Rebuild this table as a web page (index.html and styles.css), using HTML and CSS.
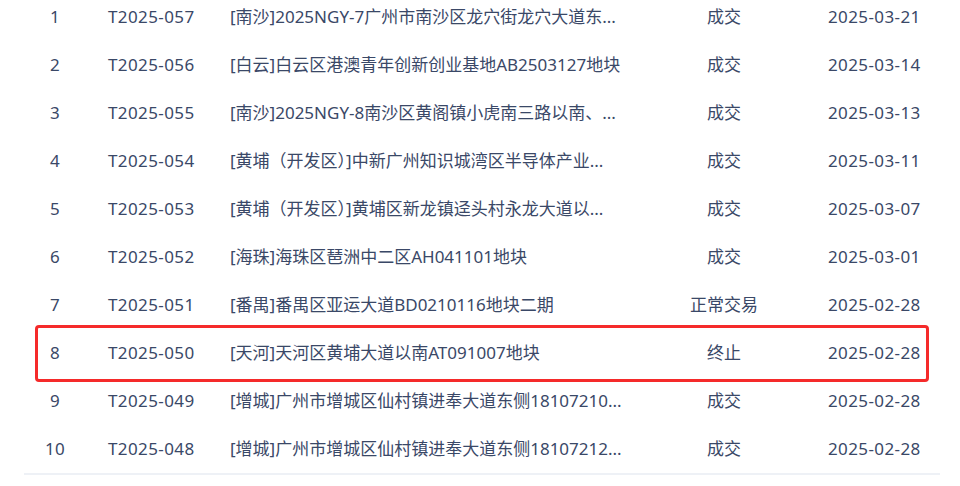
FILE: index.html
```html
<!DOCTYPE html>
<html lang="zh-CN">
<head>
<meta charset="utf-8">
<title>土地交易列表</title>
<link rel="stylesheet" href="styles.css">
</head>
<body>
<div class="list">
  <div class="row"><span class="c-idx">1</span><span class="c-code">T2025-057</span><span class="c-name">[南沙]2025NGY-7广州市南沙区龙穴街龙穴大道东...</span><span class="c-status">成交</span><span class="c-date">2025-03-21</span></div>
  <div class="row"><span class="c-idx">2</span><span class="c-code">T2025-056</span><span class="c-name">[白云]白云区港澳青年创新创业基地AB2503127地块</span><span class="c-status">成交</span><span class="c-date">2025-03-14</span></div>
  <div class="row"><span class="c-idx">3</span><span class="c-code">T2025-055</span><span class="c-name">[南沙]2025NGY-8南沙区黄阁镇小虎南三路以南、...</span><span class="c-status">成交</span><span class="c-date">2025-03-13</span></div>
  <div class="row"><span class="c-idx">4</span><span class="c-code">T2025-054</span><span class="c-name">[黄埔（开发区）]中新广州知识城湾区半导体产业...</span><span class="c-status">成交</span><span class="c-date">2025-03-11</span></div>
  <div class="row"><span class="c-idx">5</span><span class="c-code">T2025-053</span><span class="c-name">[黄埔（开发区）]黄埔区新龙镇迳头村永龙大道以...</span><span class="c-status">成交</span><span class="c-date">2025-03-07</span></div>
  <div class="row"><span class="c-idx">6</span><span class="c-code">T2025-052</span><span class="c-name">[海珠]海珠区琶洲中二区AH041101地块</span><span class="c-status">成交</span><span class="c-date">2025-03-01</span></div>
  <div class="row"><span class="c-idx">7</span><span class="c-code">T2025-051</span><span class="c-name">[番禺]番禺区亚运大道BD0210116地块二期</span><span class="c-status">正常交易</span><span class="c-date">2025-02-28</span></div>
  <div class="row row-marked"><span class="c-idx">8</span><span class="c-code">T2025-050</span><span class="c-name">[天河]天河区黄埔大道以南AT091007地块</span><span class="c-status">终止</span><span class="c-date">2025-02-28</span></div>
  <div class="row"><span class="c-idx">9</span><span class="c-code">T2025-049</span><span class="c-name">[增城]广州市增城区仙村镇进奉大道东侧18107210...</span><span class="c-status">成交</span><span class="c-date">2025-02-28</span></div>
  <div class="row"><span class="c-idx">10</span><span class="c-code">T2025-048</span><span class="c-name">[增城]广州市增城区仙村镇进奉大道东侧18107212...</span><span class="c-status">成交</span><span class="c-date">2025-02-28</span></div>
</div>
</body>
</html>
```
FILE: styles.css
```css
html, body {
  margin: 0;
  padding: 0;
  background: #ffffff;
}
body {
  font-family: "Noto Sans", "Noto Sans CJK SC", sans-serif;
  font-size: 17px;
  color: #3a4867;
  overflow: hidden;
}
.list {
  margin: -7px 20px 0 24px;
  border-bottom: 2px solid #eef1f6;
}
.row {
  display: grid;
  grid-template-columns: 62px 122px 422px 188px 1fr;
  height: 48px;
  align-items: center;
  line-height: 24px;
}
.c-idx {
  text-align: center;
  letter-spacing: 0.4px;
}
.c-code,
.c-name {
  padding-left: 22px;
  white-space: nowrap;
  overflow: hidden;
  text-overflow: ellipsis;
}
.c-code {
  letter-spacing: 0.4px;
}
.c-status {
  text-align: center;
}
.c-date {
  padding-left: 10px;
  white-space: nowrap;
  letter-spacing: 0.4px;
}
.row-marked {
  position: relative;
}
.row-marked::after {
  content: "";
  position: absolute;
  top: -4px;
  bottom: -5px;
  left: 11px;
  right: 11px;
  border: 3px solid #f52a2a;
  border-radius: 4px;
  pointer-events: none;
}
```
